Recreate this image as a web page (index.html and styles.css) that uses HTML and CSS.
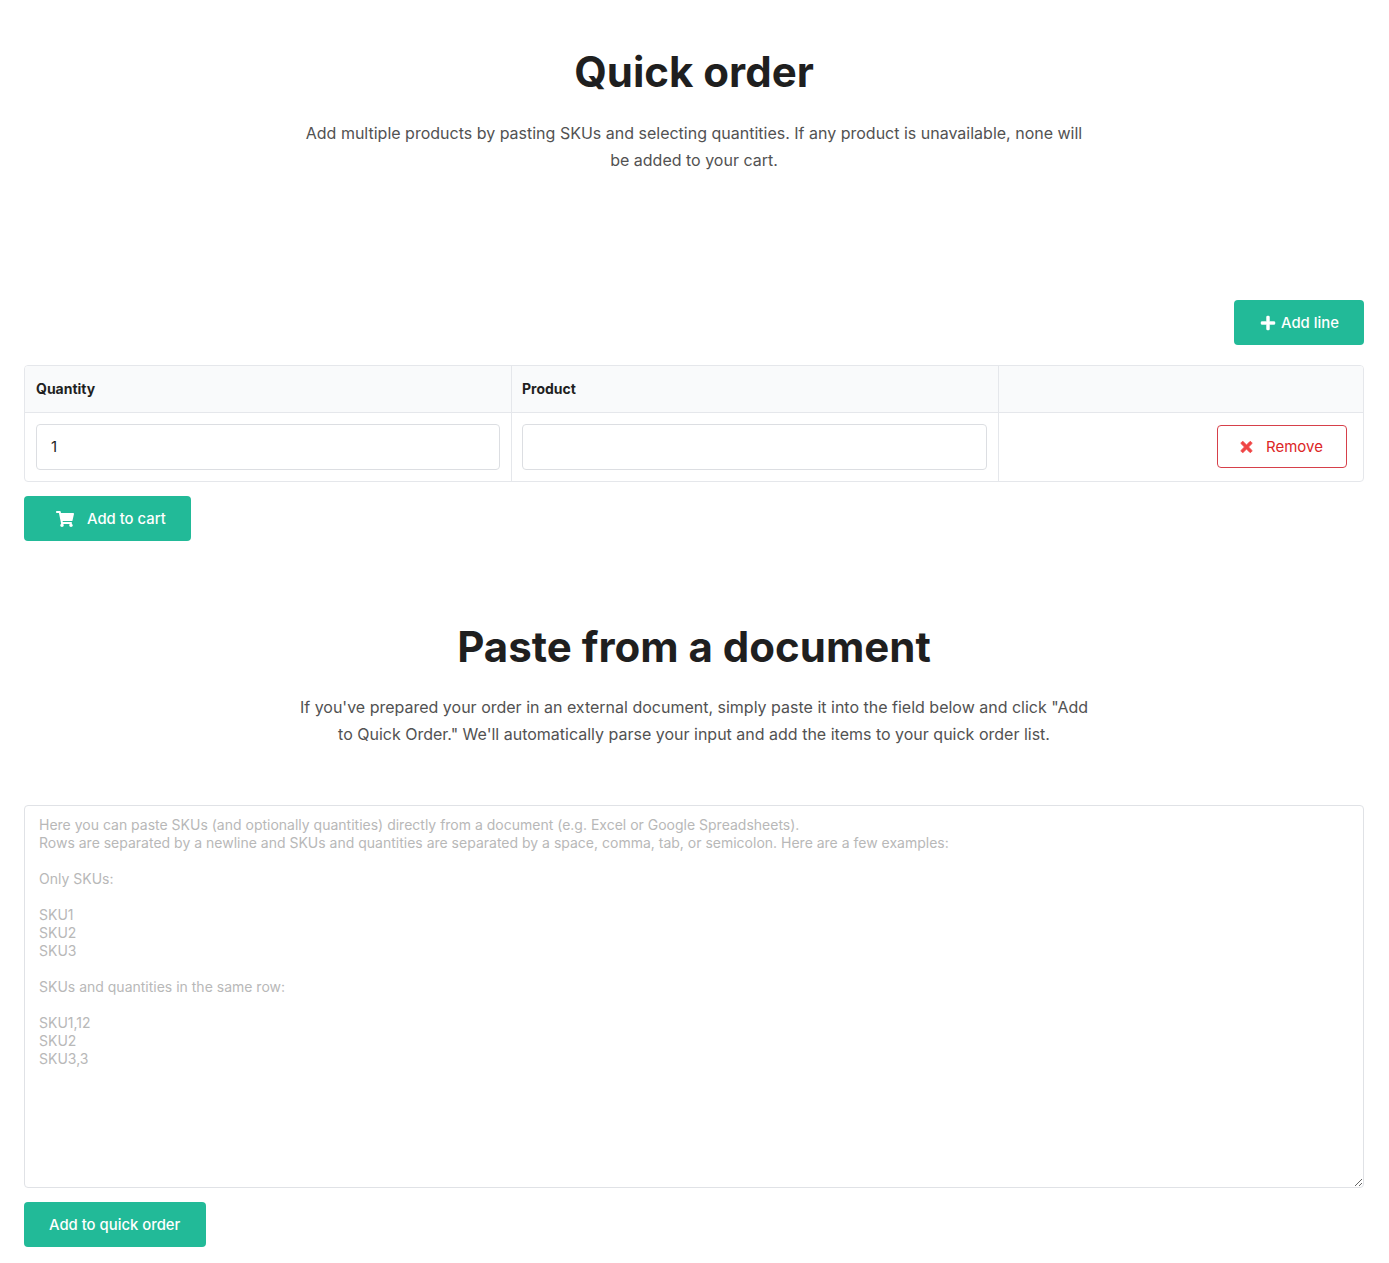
FILE: index.html
```html
<!DOCTYPE html>
<html lang="en">
<head>
<meta charset="utf-8">
<title>Quick order</title>
<link rel="stylesheet" href="styles.css">
</head>
<body>
<main class="page">
  <section class="intro intro-first">
    <h1 class="title">Quick order</h1>
    <p class="lead">Add multiple products by pasting SKUs and selecting quantities. If any product is unavailable, none will be added to your cart.</p>
  </section>
  <div class="toolbar">
    <button class="btn btn-add-line" type="button">
      <svg class="icon-plus" viewBox="0 0 448 512" aria-hidden="true"><path d="M416 208H272V64c0-17.67-14.33-32-32-32h-32c-17.67 0-32 14.33-32 32v144H32c-17.67 0-32 14.33-32 32v32c0 17.67 14.33 32 32 32h144v144c0 17.67 14.33 32 32 32h32c17.67 0 32-14.33 32-32V304h144c17.67 0 32-14.33 32-32v-32c0-17.67-14.33-32-32-32z"/></svg>
      Add line
    </button>
  </div>
  <div class="table-wrap">
    <table class="lines">
      <colgroup><col class="col-a"><col class="col-b"><col class="col-c"></colgroup>
      <thead>
        <tr><th>Quantity</th><th>Product</th><th></th></tr>
      </thead>
      <tbody>
        <tr>
          <td><input class="field" type="text" value="1" aria-label="Quantity"></td>
          <td><input class="field" type="text" aria-label="Product"></td>
          <td class="cell-action">
            <button class="btn-remove" type="button">
              <svg class="icon-x" viewBox="0 0 352 512" aria-hidden="true"><path d="M242.72 256l100.07-100.07c12.28-12.28 12.28-32.19 0-44.48l-22.24-22.24c-12.28-12.28-32.19-12.28-44.48 0L176 189.28 75.93 89.21c-12.28-12.28-32.19-12.28-44.48 0L9.21 111.45c-12.28 12.28-12.28 32.19 0 44.48L109.28 256 9.21 356.07c-12.28 12.28-12.28 32.19 0 44.48l22.24 22.24c12.28 12.28 32.2 12.28 44.48 0L176 322.72l100.07 100.07c12.28 12.28 32.2 12.28 44.48 0l22.24-22.24c12.28-12.28 12.28-32.19 0-44.48L242.72 256z"/></svg>
              Remove
            </button>
          </td>
        </tr>
      </tbody>
    </table>
  </div>
  <div class="cart-row">
    <button class="btn btn-cart" type="button">
      <svg class="icon-cart" viewBox="0 0 576 512" aria-hidden="true"><path d="M528.12 301.319l47.273-208C578.806 78.301 567.391 64 551.99 64H159.208l-9.166-44.81C147.758 8.021 137.93 0 126.529 0H24C10.745 0 0 10.745 0 24v16c0 13.255 10.745 24 24 24h69.883l70.248 343.435C147.325 417.1 136 435.222 136 456c0 30.928 25.072 56 56 56s56-25.072 56-56c0-15.674-6.447-29.835-16.824-40h209.647C430.447 426.165 424 440.326 424 456c0 30.928 25.072 56 56 56s56-25.072 56-56c0-22.172-12.888-41.332-31.579-50.405l5.517-24.276c3.413-15.018-8.002-29.319-23.403-29.319H218.117l-6.545-32h293.145c11.206 0 20.92-7.754 23.403-18.681z"/></svg>
      Add to cart
    </button>
  </div>
  <section class="intro intro-second">
    <h2 class="title">Paste from a document</h2>
    <p class="lead">If you've prepared your order in an external document, simply paste it into the field below and click "Add to Quick Order." We'll automatically parse your input and add the items to your quick order list.</p>
  </section>
  <textarea class="paste" aria-label="Paste from a document" placeholder="Here you can paste SKUs (and optionally quantities) directly from a document (e.g. Excel or Google Spreadsheets).&#10;Rows are separated by a newline and SKUs and quantities are separated by a space, comma, tab, or semicolon. Here are a few examples:&#10;&#10;Only SKUs:&#10;&#10;SKU1&#10;SKU2&#10;SKU3&#10;&#10;SKUs and quantities in the same row:&#10;&#10;SKU1,12&#10;SKU2&#10;SKU3,3"></textarea>
  <div class="paste-row">
    <button class="btn btn-paste" type="button">Add to quick order</button>
  </div>
</main>
</body>
</html>
```

FILE: styles.css
```css
* { box-sizing: border-box; }
html, body { margin: 0; background: #fff; }
body {
  font-family: Inter, "Liberation Sans", sans-serif;
  color: #1f1f1f;
  font-size: 16px;
}
.page { padding: 0 25px 16px 24px; }
.intro { text-align: center; }
.intro-first { padding-top: 45px; height: 300px; }
.intro-first .lead { margin-top: 21px; }
.intro-second { padding-top: 79px; height: 264px; }
.title {
  margin: 0;
  font-size: 42px;
  line-height: 54px;
  font-weight: 700;
  color: #1f1f1f;
}
.lead {
  margin: 20px auto 0;
  max-width: 800px;
  font-size: 16px;
  line-height: 27px;
  color: #525252;
}
.toolbar { display: flex; justify-content: flex-end; }
.btn {
  display: inline-flex;
  align-items: center;
  height: 45px;
  border: 0;
  border-radius: 4px;
  background: #22ba98;
  color: #fff;
  font-family: inherit;
  font-size: 14.85px;
  font-weight: 500;
  padding: 0 25px;
}
.btn-add-line { gap: 6px; width: 130px; padding-left: 27px; padding-right: 0; }
.btn-cart { gap: 13px; padding-left: 32px; }
.btn-paste { padding-right: 26px; }
.icon-plus {
  width: 14px;
  height: 16px;
  fill: #fff;
  stroke: #fff;
  stroke-width: 14;
  overflow: visible;
}
.icon-cart { width: 18px; height: 16px; fill: #fff; }
.table-wrap {
  margin-top: 20px;
  border: 1px solid #e5e7eb;
  border-radius: 4px;
  overflow: hidden;
}
.lines {
  width: 100%;
  border-collapse: separate;
  border-spacing: 0;
  table-layout: fixed;
}
.col-a, .col-b { width: 36.4%; }
.lines th {
  height: 47px;
  background: #f9fafb;
  border-bottom: 1px solid #e5e7eb;
  border-right: 1px solid #e5e7eb;
  padding: 0 11px 2px;
  text-align: left;
  font-size: 14px;
  font-weight: 700;
  color: #1f1f1f;
}
.lines td {
  height: 68px;
  padding: 11px;
  border-right: 1px solid #e5e7eb;
}
.lines th:nth-child(2), .lines td:nth-child(2) { padding-left: 10px; }
.lines th:last-child, .lines td:last-child { border-right: 0; }
.field {
  display: block;
  width: 100%;
  height: 46px;
  border: 1px solid #dcdee2;
  border-radius: 4px;
  padding: 0 14px 2px;
  font-family: inherit;
  font-size: 15px;
  color: #1f1f1f;
  background: #fff;
}
.lines td.cell-action { padding: 12px 16px 0 0; vertical-align: top; }
.btn-remove {
  display: flex;
  align-items: center;
  justify-content: center;
  gap: 14px;
  width: 130px;
  height: 43px;
  margin-left: auto;
  border: 1px solid #d6404a;
  border-radius: 4px;
  background: #fff;
  color: #dc2626;
  font-family: inherit;
  font-size: 15px;
}
.icon-x {
  width: 11px;
  height: 16px;
  fill: #ef4444;
  stroke: #ef4444;
  stroke-width: 24;
  overflow: visible;
}
.cart-row { margin-top: 14px; }
.paste {
  display: block;
  width: 100%;
  height: 383px;
  border: 1px solid #e0e2e6;
  border-radius: 4px;
  padding: 10px 14px;
  font-family: inherit;
  font-size: 14px;
  line-height: 18px;
  color: #1f1f1f;
  background: #fff;
  resize: both;
}
.paste::placeholder { color: #b8b8b8; opacity: 1; }
.paste-row { margin-top: 14px; }
```
